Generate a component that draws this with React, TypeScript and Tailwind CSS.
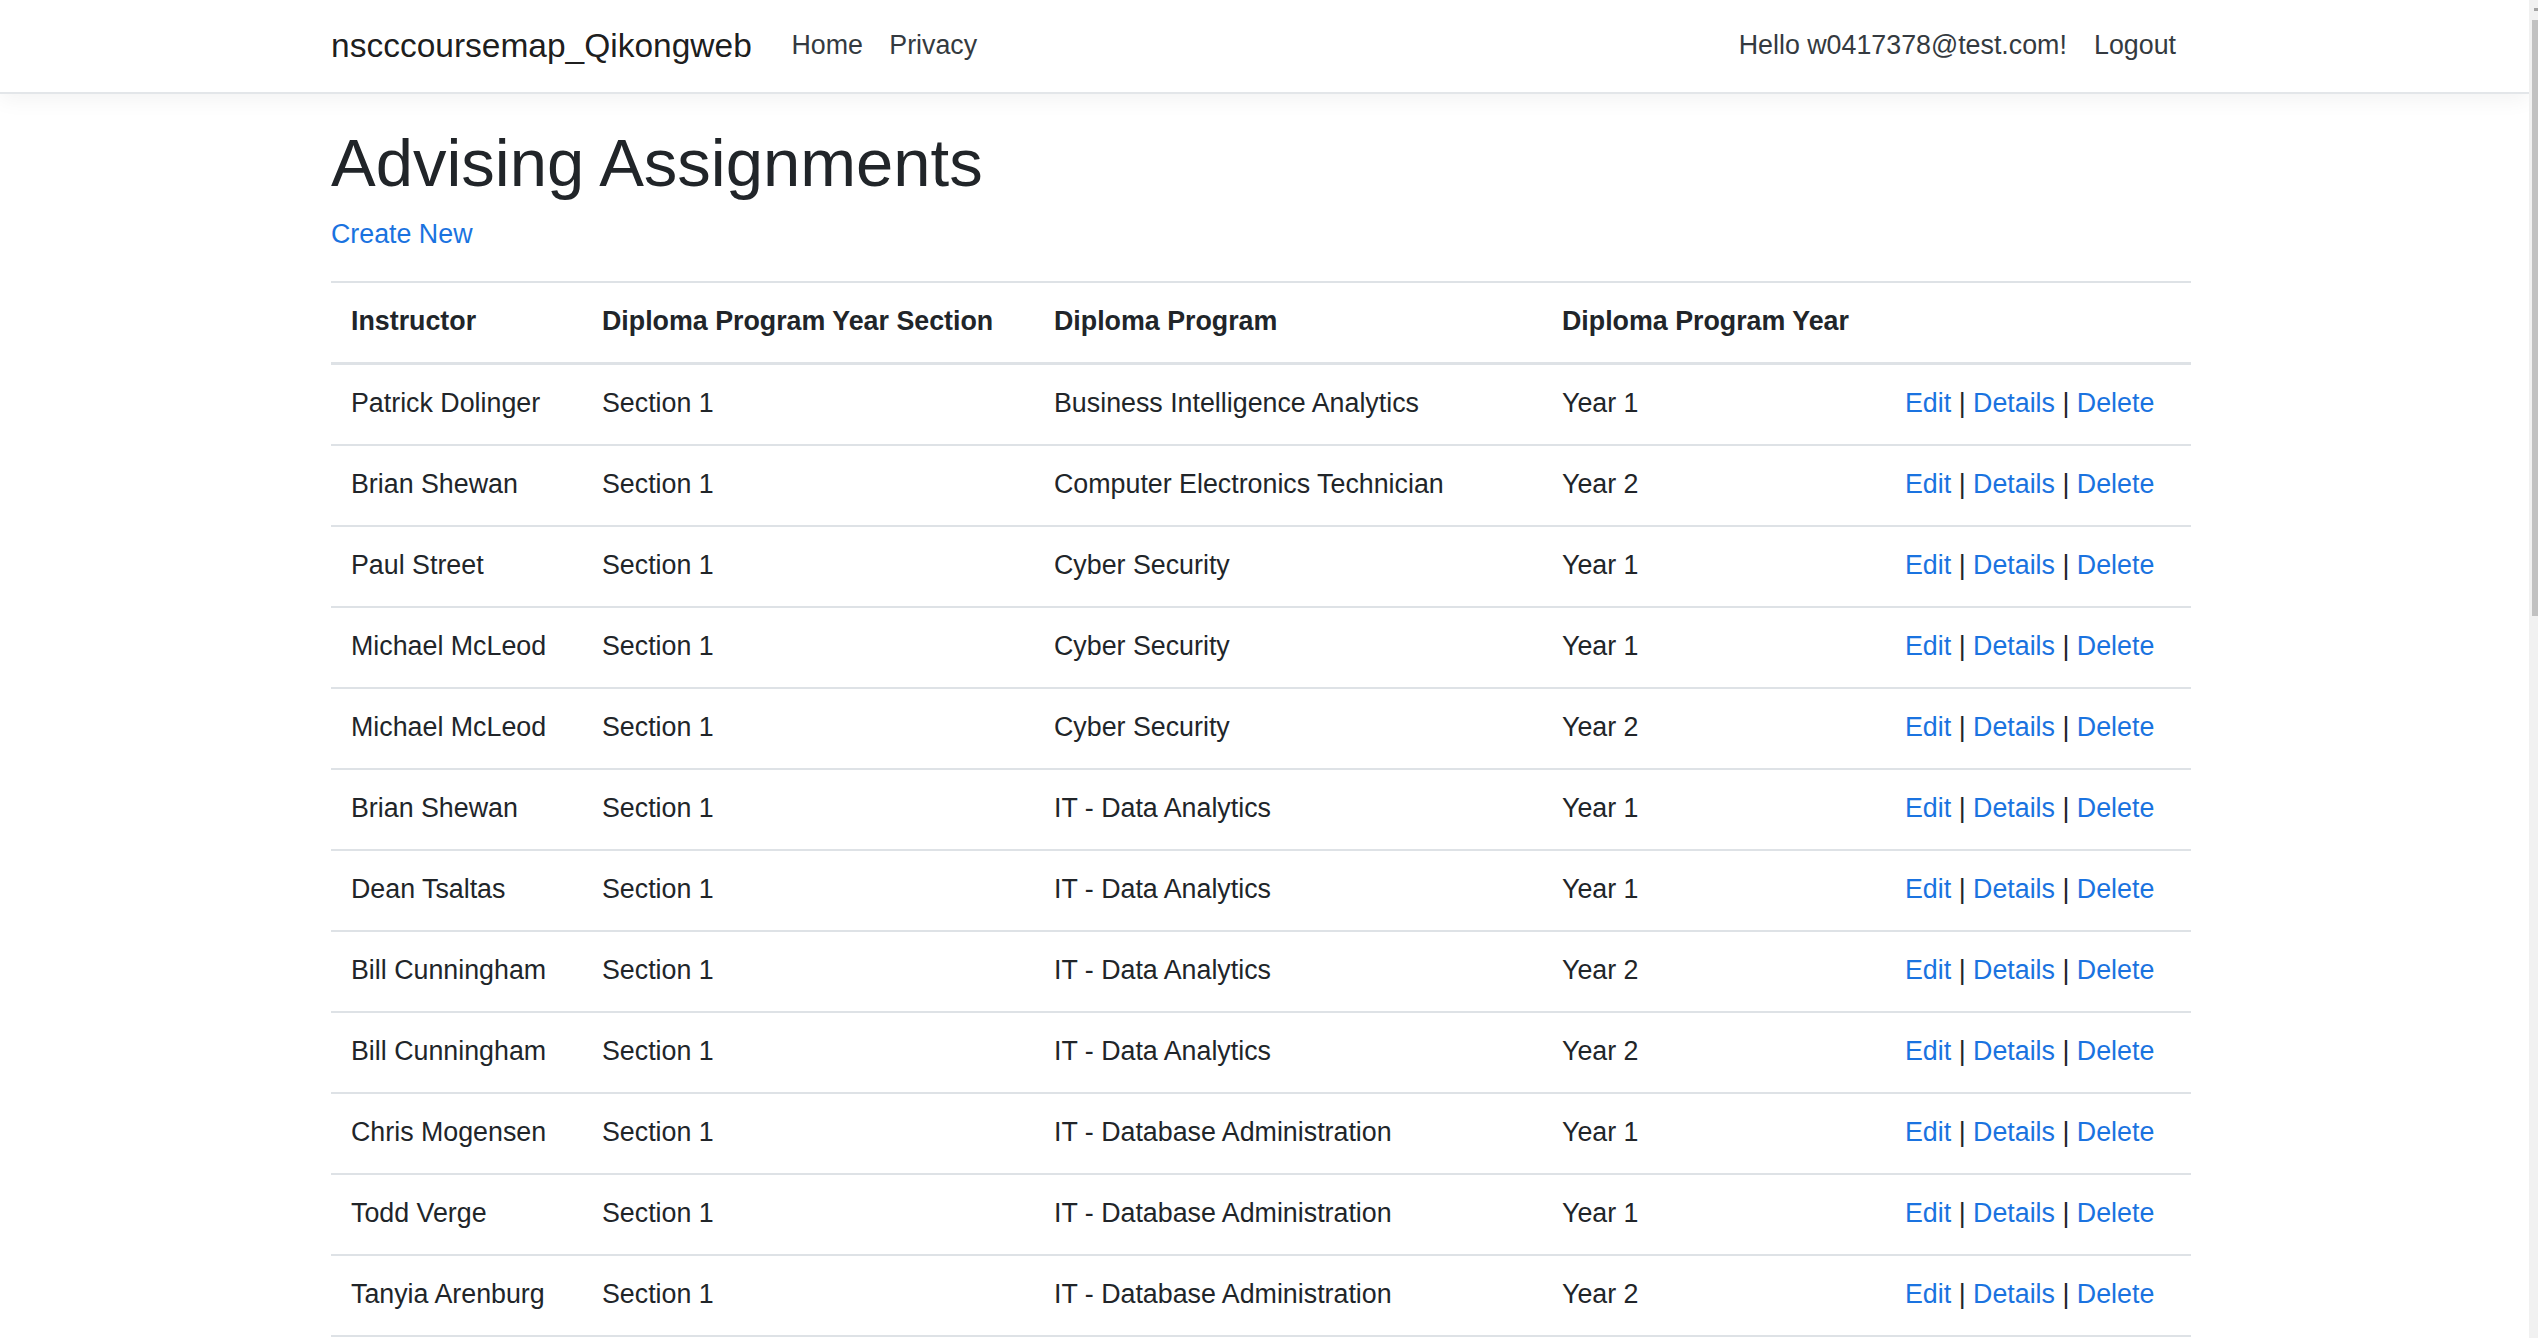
const rows = [
  ['Patrick Dolinger', 'Section 1', 'Business Intelligence Analytics', 'Year 1'],
  ['Brian Shewan', 'Section 1', 'Computer Electronics Technician', 'Year 2'],
  ['Paul Street', 'Section 1', 'Cyber Security', 'Year 1'],
  ['Michael McLeod', 'Section 1', 'Cyber Security', 'Year 1'],
  ['Michael McLeod', 'Section 1', 'Cyber Security', 'Year 2'],
  ['Brian Shewan', 'Section 1', 'IT - Data Analytics', 'Year 1'],
  ['Dean Tsaltas', 'Section 1', 'IT - Data Analytics', 'Year 1'],
  ['Bill Cunningham', 'Section 1', 'IT - Data Analytics', 'Year 2'],
  ['Bill Cunningham', 'Section 1', 'IT - Data Analytics', 'Year 2'],
  ['Chris Mogensen', 'Section 1', 'IT - Database Administration', 'Year 1'],
  ['Todd Verge', 'Section 1', 'IT - Database Administration', 'Year 1'],
  ['Tanyia Arenburg', 'Section 1', 'IT - Database Administration', 'Year 2'],
];

const headers = ['Instructor', 'Diploma Program Year Section', 'Diploma Program', 'Diploma Program Year', ''];

export default function App() {
  return (
    <div className="flex h-screen overflow-hidden bg-white font-['Liberation_Sans',Arial,sans-serif] text-[26.8px] text-[#212529]">
      <div className="flex-1 min-w-0 overflow-hidden">
        {/* navbar */}
        <header className="relative h-[94px] border-b-2 border-[#e3e6e9] bg-white shadow-[0_6px_20px_rgba(0,0,0,0.05)]">
          <nav className="ml-[331px] w-[1860px] h-full flex items-center">
            <a href="#" className="mr-[26.4px] text-[33.5px] leading-[49.5px] text-[rgba(0,0,0,0.9)]">nscccoursemap_Qikongweb</a>
            <a href="#" className="px-[13.2px] leading-[39.6px] text-[#343a40]">Home</a>
            <a href="#" className="px-[13.2px] leading-[39.6px] text-[#343a40]">Privacy</a>
            <div className="ml-auto flex items-center">
              <a href="#" className="px-[13.2px] leading-[39.6px] text-[#343a40]">Hello w0417378@test.com!</a>
              <button className="pl-[14px] pr-[15px] leading-[39.6px] text-[#343a40]">Logout</button>
            </div>
          </nav>
        </header>

        <main className="ml-[331px] w-[1860px] pt-[29px]">
          <h1 className="mb-[13.2px] text-[67px] leading-[79.2px] font-normal">Advising Assignments</h1>
          <p className="mb-[26.4px] leading-[39.6px]">
            <a href="#" className="text-[#1a73e0]">Create New</a>
          </p>

          <table className="w-full table-fixed border-collapse border-b-2 border-[#dee2e6]">
            <colgroup>
              <col className="w-[251px]" />
              <col className="w-[452px]" />
              <col className="w-[508px]" />
              <col className="w-[343px]" />
              <col className="w-[306px]" />
            </colgroup>
            <thead>
              <tr>
                {headers.map((h, i) => (
                  <th key={i} className="border-t-2 border-b-[3px] border-[#dee2e6] px-[20px] pt-[18px] pb-[21px] text-left font-bold leading-[40px] align-top">{h}</th>
                ))}
              </tr>
            </thead>
            <tbody>
              {rows.map((r, idx) => (
                <tr key={idx}>
                  {r.map((c, i) => (
                    <td key={i} className="border-t-2 border-[#dee2e6] px-[20px] pt-[18px] pb-[21px] leading-[40px] align-top whitespace-nowrap">{c}</td>
                  ))}
                  <td className="border-t-2 border-[#dee2e6] px-[20px] pt-[18px] pb-[21px] leading-[40px] align-top whitespace-nowrap">
                    <a href="#" className="text-[#1a73e0]">Edit</a> | <a href="#" className="text-[#1a73e0]">Details</a> | <a href="#" className="text-[#1a73e0]">Delete</a>
                  </td>
                </tr>
              ))}
            </tbody>
          </table>
        </main>
      </div>

      {/* page scrollbar */}
      <div className="w-[9px] h-full bg-[#f1f1f1] flex flex-col">
        <div className="mt-[8px] ml-[5px] w-[4px] h-[3px] bg-[#a3a3a3]" />
        <div className="mt-[9px] ml-[3px] w-[6px] h-[596px] bg-[#c1c1c1]" />
      </div>
    </div>
  );
}
